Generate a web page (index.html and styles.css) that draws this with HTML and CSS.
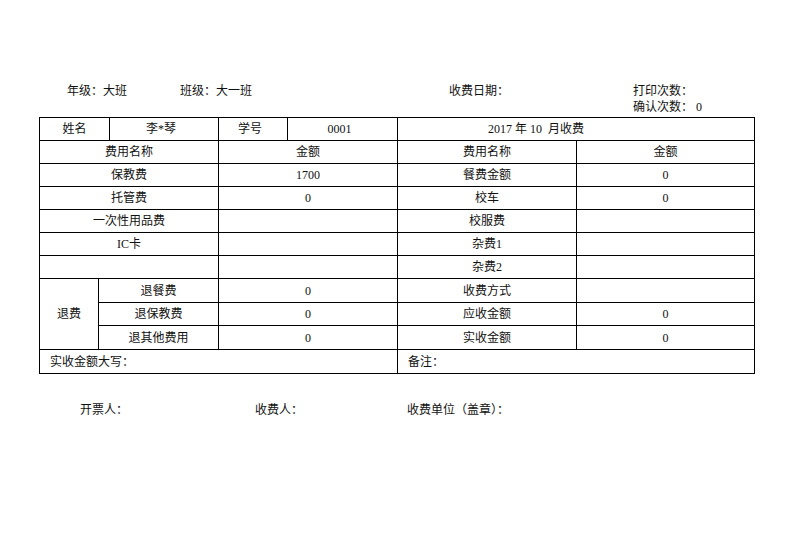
FILE: index.html
```html
<!DOCTYPE html>
<html lang="zh-CN">
<head>
<meta charset="utf-8">
<title>收费单</title>
<link rel="stylesheet" href="styles.css">
</head>
<body>
<div class="page">
  <div class="header">
    <div class="h-grade">年级：大班</div>
    <div class="h-class">班级：大一班</div>
    <div class="h-date">收费日期：</div>
    <div class="h-counts">
      <div>打印次数：</div>
      <div>确认次数： 0</div>
    </div>
  </div>
  <table class="bill">
    <colgroup>
      <col class="c1"><col class="c2"><col class="c3"><col class="c4"><col class="c5"><col class="c6"><col class="c7">
    </colgroup>
    <tr class="r23">
      <td colspan="2">姓名</td>
      <td class="shift">李*琴</td>
      <td class="shift">学号</td>
      <td class="shift">0001</td>
      <td colspan="2" class="month">2017 年 10  月收费</td>
    </tr>
    <tr class="r23">
      <td colspan="3">费用名称</td>
      <td colspan="2">金额</td>
      <td>费用名称</td>
      <td>金额</td>
    </tr>
    <tr class="r23">
      <td colspan="3">保教费</td>
      <td colspan="2">1700</td>
      <td>餐费金额</td>
      <td>0</td>
    </tr>
    <tr class="r23">
      <td colspan="3">托管费</td>
      <td colspan="2">0</td>
      <td>校车</td>
      <td>0</td>
    </tr>
    <tr class="r23">
      <td colspan="3">一次性用品费</td>
      <td colspan="2"></td>
      <td>校服费</td>
      <td></td>
    </tr>
    <tr class="r23">
      <td colspan="3">IC卡</td>
      <td colspan="2"></td>
      <td>杂费1</td>
      <td></td>
    </tr>
    <tr class="r23">
      <td colspan="3"></td>
      <td colspan="2"></td>
      <td>杂费2</td>
      <td></td>
    </tr>
    <tr class="r24">
      <td rowspan="3">退费</td>
      <td colspan="2">退餐费</td>
      <td colspan="2">0</td>
      <td>收费方式</td>
      <td></td>
    </tr>
    <tr class="r23">
      <td colspan="2">退保教费</td>
      <td colspan="2">0</td>
      <td>应收金额</td>
      <td>0</td>
    </tr>
    <tr class="r24">
      <td colspan="2">退其他费用</td>
      <td colspan="2">0</td>
      <td>实收金额</td>
      <td>0</td>
    </tr>
    <tr class="r24">
      <td colspan="5" class="left">实收金额大写：</td>
      <td colspan="2" class="left">备注：</td>
    </tr>
  </table>
  <div class="footer">
    <div class="f-issuer">开票人：</div>
    <div class="f-payee">收费人：</div>
    <div class="f-unit">收费单位（盖章）：</div>
  </div>
</div>
</body>
</html>
```
FILE: styles.css
```css
html, body {
  margin: 0;
  padding: 0;
  background: #fff;
}
body {
  font-family: "Liberation Serif", "Noto Sans CJK SC", serif;
  font-size: 12px;
  color: #111;
}
.page {
  padding-top: 83px;
}
.header {
  display: flex;
  padding-left: 67px;
  line-height: 16px;
  height: 32px;
  margin-bottom: 2px;
}
.h-grade { width: 113px; }
.h-class { width: 269px; }
.h-date { width: 184px; }
.h-counts { display: flex; flex-direction: column; }

.bill {
  margin-left: 39px;
  border-collapse: collapse;
  table-layout: fixed;
  width: 715px;
}
.bill td {
  border: 1px solid #000;
  padding: 0;
  text-align: center;
  vertical-align: middle;
  line-height: 14px;
  white-space: pre;
  overflow: hidden;
}
.c1 { width: 59px; }
.c2 { width: 11px; }
.c3 { width: 109px; }
.c4 { width: 69px; }
.c5 { width: 110px; }
.c6 { width: 179px; }
.c7 { width: 178px; }
.r23 { height: 23px; }
.r24 { height: 24px; }
.bill td.left {
  text-align: left;
  padding-left: 10px;
}
.bill td.month {
  padding-right: 80px;
}
.bill td.shift {
  padding-right: 6px;
}

.footer {
  display: flex;
  margin-top: 28px;
  padding-left: 80px;
  line-height: 16px;
}
.f-issuer { width: 175px; }
.f-payee { width: 152px; }
```
